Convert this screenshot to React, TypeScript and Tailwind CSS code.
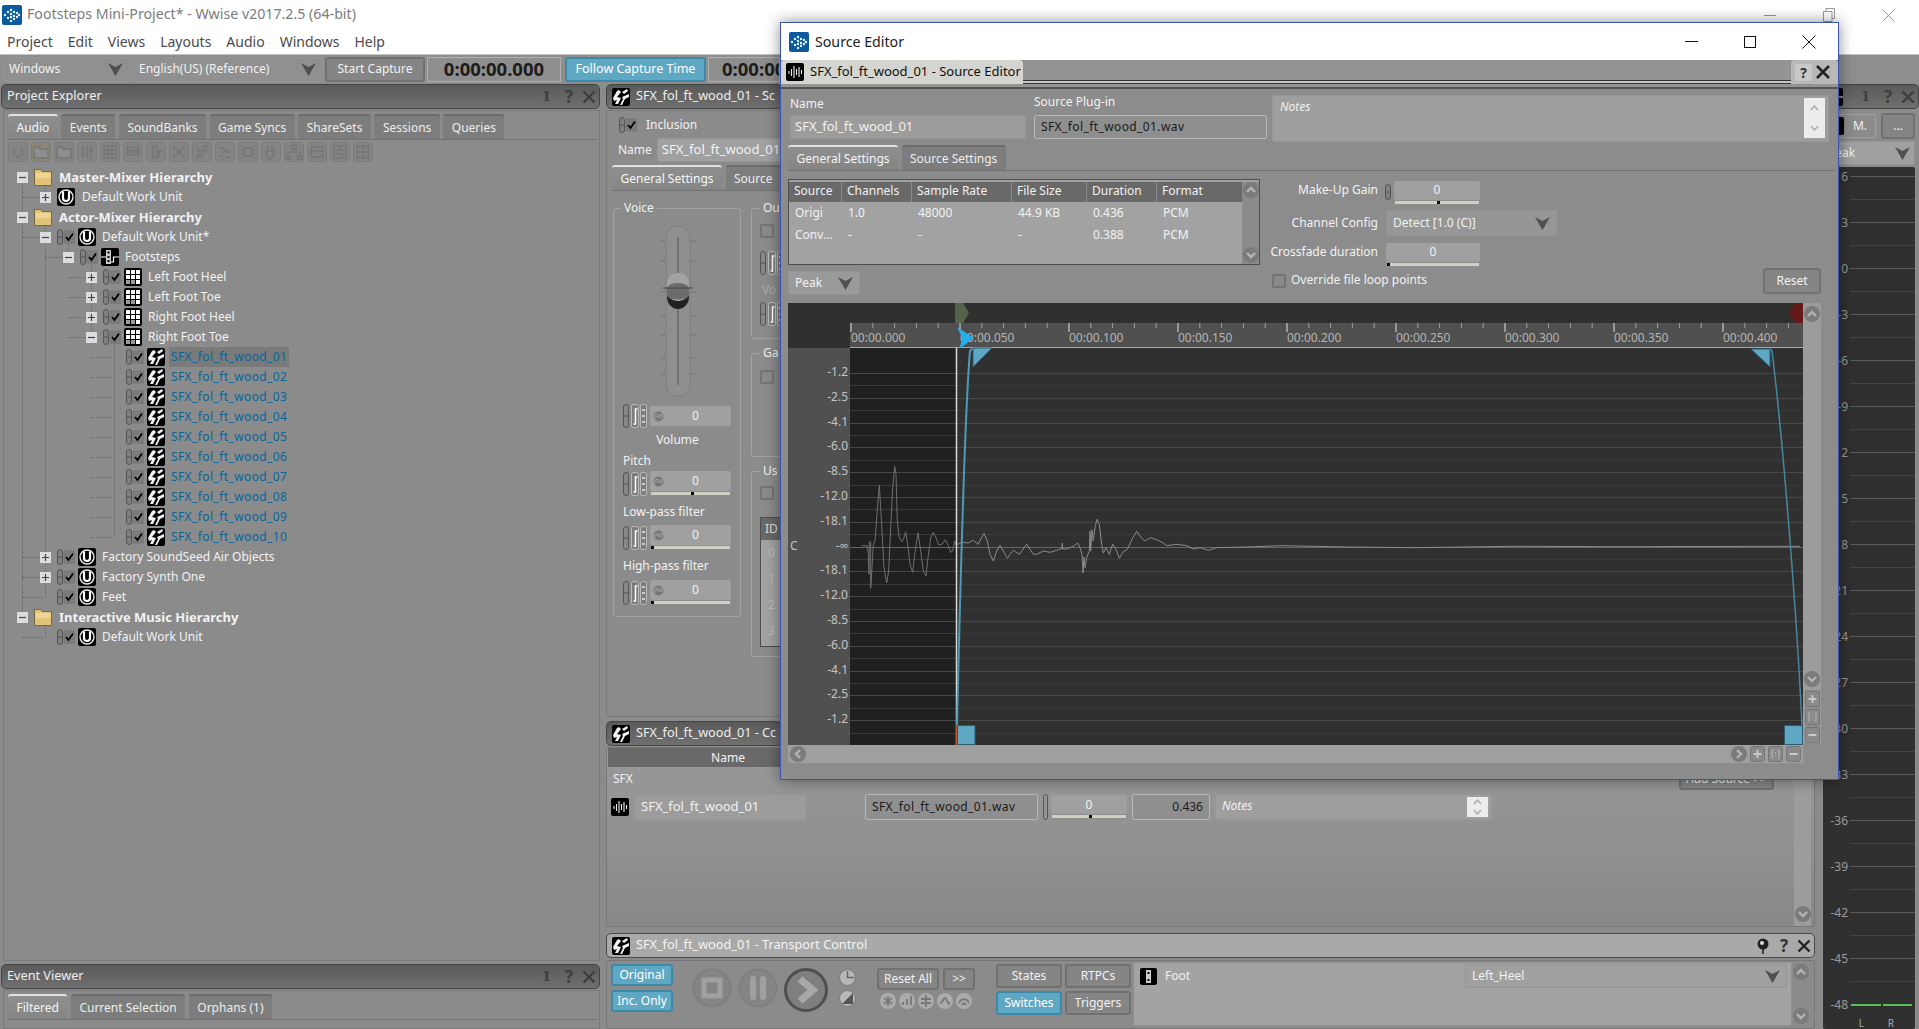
import React from "react";

const Logo = () => (
  <svg width="20" height="20" viewBox="0 0 20 20">
    <rect width="20" height="20" rx="2" fill="#0b5a9e" />
    {[[3, 10], [6, 7], [6, 13], [9, 5], [9, 9], [9, 12], [9, 16], [12, 7], [12, 11], [12, 14], [15, 8], [15, 12], [17, 10]].map(([x, y], i) => (
      <circle key={i} cx={x} cy={y} r="1.2" fill="#e8f4ff" />
    ))}
  </svg>
);

const Caret = () => (
  <svg width="15" height="13" viewBox="0 0 15 13" className="shrink-0">
    <path d="M0 0 L7.5 4 L15 0 L7.5 13Z" fill="#4f4f4f" />
  </svg>
);

const UIcon = () => (
  <svg width="18" height="18" viewBox="0 0 18 18" className="shrink-0">
    <rect width="18" height="18" rx="2" fill="#000" />
    <circle cx="9" cy="9" r="7" fill="none" stroke="#eee" strokeWidth="1.4" />
    <path d="M6 3.5V10a3 3 0 0 0 6 0V3.5" fill="none" stroke="#fff" strokeWidth="2.2" />
  </svg>
);

const FolderIcon = () => (
  <svg width="18" height="18" viewBox="0 0 18 18" className="shrink-0">
    <path d="M.5 1.500h6l1.500 2h9.500v14H.5z" fill="#e2c377" stroke="#7b6a3c" />
    <path d="M1.500 5h15v5h-15z" fill="#ecd596" />
  </svg>
);

const GridIcon = () => (
  <svg width="18" height="18" viewBox="0 0 18 18" className="shrink-0">
    <rect width="18" height="18" rx="2" fill="#000" />
    {[2, 7, 12].flatMap((y) =>
      [2, 7, 12].map((x) => <rect key={`${x}-${y}`} x={x} y={y} width="4" height="4" fill={y === 12 && x < 12 ? "#999" : "#fff"} />)
    )}
  </svg>
);

const BlendIcon = () => (
  <svg width="18" height="18" viewBox="0 0 18 18" className="shrink-0">
    <rect width="18" height="18" rx="2" fill="#000" />
    <path d="M5 2h5v14H5z" fill="#ccc" />
    <path d="M6.500 3.500h2v2h-2zM6.500 8h2v2h-2zM6.500 12h2v2h-2z" fill="#000" />
    <path d="M0 9h5M10 14h2.500V9H18" stroke="#fff" fill="none" strokeWidth="1.200" />
  </svg>
);

const SoundIcon = () => (
  <svg width="18" height="18" viewBox="0 0 18 18" className="shrink-0">
    <rect width="18" height="18" rx="2" fill="#000" />
    <path d="M1 10 5 3l2-1 2 2-4 5 4 1-3 6H3l2-4-3 1zM10 4l5-3 1 2-4 3zM10 9l7-3v3l-4 2-3 6H8l3-6z" fill="#f2f2f2" />
  </svg>
);

const WaveIcon = () => (
  <svg width="18" height="18" viewBox="0 0 18 18" className="shrink-0">
    <rect width="18" height="18" rx="2" fill="#000" />
    <path d="M3 8v3M5.500 6v7M8 3v12M10.500 6v6M13 4v10M15.500 7v4" stroke="#eee" strokeWidth="1.100" />
  </svg>
);

const Check = ({ box = true }: { box?: boolean }) => (
  <svg width="18" height="17" viewBox="0 0 18 17" className="shrink-0">
    <rect x=".5" y=".5" width="5" height="15" rx="2.500" fill="#808080" stroke="#555" />
    <path d="M.5 8h5" stroke="#555" />
    {box && <rect x="7" y="2" width="11" height="12" rx="1" fill="#7c7c7c" stroke="#747474" />}
    {box && <path d="M9 8l2.500 3L16 4.500" fill="none" stroke="#000" strokeWidth="1.800" />}
  </svg>
);

const Expander = ({ open }: { open: boolean }) => (
  <svg width="11" height="11" viewBox="0 0 11 11" className="relative shrink-0">
    <rect width="11" height="11" fill="#dcdcdc" />
    <path d={open ? "M2 5.500h7" : "M2 5.500h7M5.500 2v7"} stroke="#2b3f8c" strokeWidth="1.200" />
  </svg>
);

const Box = ({ className = "" }: { className?: string }) => (
  <span className={`inline-block shrink-0 rounded-[2px] border-2 border-[#747474] bg-[#8a8a8a] ${className}`} />
);

const HeaderBtns = ({ pin = false, dark = false }: { pin?: boolean; dark?: boolean }) => (
  <div className={`-mr-[2px] ml-auto flex items-center gap-[5px] text-[17px] font-bold ${dark ? "text-[#333]" : "text-[#3e3e3e]"}`}>
    {pin ? (
      <svg width="14" height="18" viewBox="0 0 14 18" className="mr-[1px]">
        <circle cx="7" cy="7" r="5.500" fill="#222" />
        <circle cx="6" cy="6" r="2" fill="#ddd" />
        <path d="M7 12v5" stroke="#222" strokeWidth="1.500" />
      </svg>
    ) : (
      <span className="mr-[5px] font-['DejaVu_Serif',serif] text-[13px]">1</span>
    )}
    <span className="w-[16px] text-center">?</span>
    <svg width="14" height="14" viewBox="0 0 14 14">
      <path d="M1.500 1.500l11 11M12.500 1.500l-11 11" stroke={dark ? "#222" : "#3e3e3e"} strokeWidth="2.400" />
    </svg>
  </div>
);

const Header = ({ title, icon, right, active }: { title: string; icon?: React.ReactNode; right?: React.ReactNode; active?: boolean }) => (
  <div
    className={`flex h-[25px] shrink-0 items-center gap-[6px] overflow-hidden whitespace-nowrap rounded-[5px] border px-[5px] text-[12.7px] ${
      active
        ? "border-[#4a4a4a] bg-[#a9a9a9] text-[#f4f4f4]"
        : "border-[#444] bg-linear-to-b from-[#5a5a5a] to-[#707070] text-[#efefef]"
    }`}
  >
    {icon}
    <span className="pb-[2px]">{title}</span>
    {right}
  </div>
);

const Tabs = ({ items, active = 0, className = "" }: { items: string[]; active?: number; className?: string }) => (
  <div className={`flex h-[26px] shrink-0 items-end gap-[3.5px] border-b border-[#727272] text-[12px] ${className}`}>
    {items.map((t, i) => (
      <div
        key={t}
        className={`flex h-[25px] items-center whitespace-nowrap rounded-t-[3px] border-t-2 px-[8.5px] ${
          i === active
            ? "border-[#e2e2e2] bg-linear-to-b from-[#8f8f8f] to-[#858585] text-[#f6f6f6]"
            : "border-[#6c6c6c] bg-[#7d7d7d] text-[#ededed]"
        }`}
      >
        {t}
      </div>
    ))}
  </div>
);

const RoundBtn = ({ dir }: { dir: "up" | "down" | "left" | "right" }) => {
  const d = { up: "M4 10l4-4 4 4", down: "M4 6l4 4 4-4", left: "M10 4l-4 4 4 4", right: "M6 4l4 4-4 4" }[dir];
  return (
    <svg width="16" height="16" viewBox="0 0 16 16" className="shrink-0">
      <circle cx="8" cy="8" r="8" fill="#7b7b7b" />
      <path d={d} fill="none" stroke="#b4b4b4" strokeWidth="2.400" />
    </svg>
  );
};

const SmallBtn = ({ sym }: { sym: string }) => (
  <svg width="15" height="16" viewBox="0 0 15 16" className="shrink-0">
    <rect x=".5" y=".5" width="14" height="15" rx="2" fill="#8a8a8a" stroke="#757575" />
    {sym === "+" && <path d="M3.500 8h8M7.500 4v8" stroke="#c8c8c8" strokeWidth="2" />}
    {sym === "-" && <path d="M3.500 8h8" stroke="#c8c8c8" strokeWidth="2" />}
    {sym === "f" && <path d="M5 4H4v8h1M10 4h1v8h-1M7.500 6v1M7.500 9v1" fill="none" stroke="#b8b8b8" />}
  </svg>
);

const Field = ({ children, className = "" }: { children?: React.ReactNode; className?: string }) => (
  <div className={`flex items-center whitespace-nowrap rounded-[2px] border border-[#959595] bg-[#a0a0a0] px-[6px] ${className}`}>{children}</div>
);

const Bar = ({ notch, className = "" }: { notch?: "mid" | "left"; className?: string }) => (
  <div className={`relative h-[5px] rounded-[1px] border border-[#8d8d8d] bg-[#cfcfc2] ${className}`}>
    {notch && <span className={`absolute top-0 h-[3px] w-[3px] bg-[#0c0c0c] ${notch === "mid" ? "left-1/2" : "left-0"}`} />}
  </div>
);

const Cluster = () => (
  <div className="flex shrink-0 items-center gap-[2px]">
    <svg width="6" height="24" viewBox="0 0 6 24">
      <rect x=".5" y=".5" width="5" height="23" rx="2.500" fill="#888" stroke="#555" />
      <path d="M.5 12h5" stroke="#555" />
    </svg>
    <svg width="16" height="24" viewBox="0 0 16 24">
      <rect x=".5" y=".5" width="7" height="23" rx="2" fill="#7d7d7d" stroke="#bbb" />
      <path d="M2.500 20h2V5h2" fill="none" stroke="#fff" strokeWidth="1.500" />
      <rect x="9.500" y=".5" width="6" height="23" rx="2" fill="#7d7d7d" stroke="#bbb" />
      <path d="M11 6h3M11 12h3M11 18h3" stroke="#ccc" strokeWidth="2" />
    </svg>
  </div>
);

const NumRow = ({ notch }: { notch?: "mid" | "left" }) => (
  <div className="flex items-center gap-[3px]">
    <Cluster />
    <div className="flex w-[81px] flex-col">
      <div className="flex h-[20px] items-center rounded-[2px] bg-[#a0a0a0] pl-[3px] text-[12px]">
        <svg width="11" height="11" viewBox="0 0 11 11">
          <circle cx="5.500" cy="5.500" r="5" fill="#777" />
          <path d="M1 6c2-3 3-3 5-2s3 0 4-1M1 8c2-3 3-3 5-2s3 0 4-1" fill="none" stroke="#aaa" />
        </svg>
        <span className="ml-[28px]">0</span>
      </div>
      {notch && <Bar notch={notch} />}
    </div>
  </div>
);

type RowT = { label: string; level: number; kind: "folder" | "unit" | "grid" | "blend" | "sound"; exp?: "+" | "-"; check?: boolean; sel?: boolean };

const sounds: RowT[] = ["01", "02", "03", "04", "05", "06", "07", "08", "09", "10"].map((n, i) => ({
  label: `SFX_fol_ft_wood_${n}`,
  level: 4,
  kind: "sound",
  check: true,
  sel: i === 0,
}));

const rows: RowT[] = [
  { label: "Master-Mixer Hierarchy", level: 0, kind: "folder", exp: "-" },
  { label: "Default Work Unit", level: 1, kind: "unit", exp: "+" },
  { label: "Actor-Mixer Hierarchy", level: 0, kind: "folder", exp: "-" },
  { label: "Default Work Unit*", level: 1, kind: "unit", exp: "-", check: true },
  { label: "Footsteps", level: 2, kind: "blend", exp: "-", check: true },
  { label: "Left Foot Heel", level: 3, kind: "grid", exp: "+", check: true },
  { label: "Left Foot Toe", level: 3, kind: "grid", exp: "+", check: true },
  { label: "Right Foot Heel", level: 3, kind: "grid", exp: "+", check: true },
  { label: "Right Foot Toe", level: 3, kind: "grid", exp: "-", check: true },
  ...sounds,
  { label: "Factory SoundSeed Air Objects", level: 1, kind: "unit", exp: "+", check: true },
  { label: "Factory Synth One", level: 1, kind: "unit", exp: "+", check: true },
  { label: "Feet", level: 1, kind: "unit", check: true },
  { label: "Interactive Music Hierarchy", level: 0, kind: "folder", exp: "-" },
  { label: "Default Work Unit", level: 1, kind: "unit", check: true },
];

const guides = [
  [0, 0, 22],
  [1, 0, 1],
  [1, 2, 21],
  [2, 3, 4],
  [3, 4, 8],
  [4, 8, 18],
  [1, 22, 23],
];

const icons = { folder: <FolderIcon />, unit: <UIcon />, grid: <GridIcon />, blend: <BlendIcon />, sound: <SoundIcon /> };

const Tree = () => (
  <div className="relative mt-[5px]">
    {guides.map(([l, a, b], i) => (
      <span
        key={i}
        className="absolute w-0 border-l border-dotted border-[#666]"
        style={{ left: 18 + 23 * l, top: a * 20 + 10, height: (b - a) * 20 }}
      />
    ))}
    {rows.map((r, i) => (
      <div key={i} className="relative flex h-5 items-center whitespace-nowrap" style={{ paddingLeft: 12 + 23 * r.level }}>
        {r.level > 0 && (
          <span
            className="absolute top-[10px] h-0 w-[20px] border-t border-dotted border-[#666]"
            style={{ left: 18 + 23 * (r.level - 1) }}
          />
        )}
        <div className="relative flex w-[18px] shrink-0 pl-[1px]">{r.exp && <Expander open={r.exp === "-"} />}</div>
        {r.check && (
          <div className="relative mr-[3px]">
            <Check />
          </div>
        )}
        <div className="relative">{icons[r.kind]}</div>
        <span
          className={`px-[2px] leading-[20px] ${r.check ? "ml-[4px]" : "ml-[5px]"} ${r.kind === "folder" ? "text-[13px] font-bold" : "text-[12px]"} ${
            r.kind === "sound" ? "text-[#07659a] tracking-[0.4px]" : "text-[#f2f2f2]"
          } ${r.sel ? "bg-[#7a7a7a]" : ""}`}
        >
          {r.label}
        </span>
      </div>
    ))}
  </div>
);

const dimGlyphs = [
  "M6 5v6a4 4 0 0 0 8 0V5",
  "M3 5h5l1 2h8v9H3z",
  "M3 5h5l1 2h8v9H3z",
  "M6 4v12M10 4v12M14 4v12M4 12h4M12 8h4",
  "M4 4h12v12H4zM8 4v12M12 4v12M4 8h12M4 12h12",
  "M4 5h12v3H4zM4 10h12v3H4z",
  "M7 4h4v12H7zM3 10h4M11 14h2v-5h4",
  "M4 5c4 0 8 10 12 10M4 15c4 0 8-10 12-10",
  "M5 15 12 4h3l-6 11zM14 9l3-1M4 5l4 4",
  "M4 6h4l4 4h4M4 14h4M11 15h5M6 10h3",
  "M6 6h8v8H6zM3 8h3M3 12h3M14 8h3M14 12h3",
  "M7 3v6M11 3v6M5 9h8v3l-3 5H8l-3-5z",
  "M8 3h4v4H8zM10 7v3M4 14v-4h12v4M2 14h4v3H2zM14 14h4v3h-4z",
  "M4 5h12v10H4zM4 9h12",
  "M4 4h12v12H4zM4 8h12M4 12h12M10 4v4M8 8v4M12 12v4",
  "M4 4h12v12H4zM10 4v12M4 10h12",
];

const DimToolbar = () => (
  <div className="mt-[2px] flex h-[20px] gap-[3px] pl-[4px]">
    {dimGlyphs.map((d, i) => (
      <svg key={i} width="20" height="20" viewBox="0 0 20 20" className="shrink-0">
        <rect x=".5" y=".5" width="19" height="19" rx="3" fill={i === 1 ? "#8a8674" : "#848484"} stroke="#7c7c7c" />
        <path d={d} fill={i === 1 || i === 2 ? "#8e8e8e" : "none"} stroke="#757575" strokeWidth="1.500" />
      </svg>
    ))}
  </div>
);

// zoomed trace points of the waveform, converted to page pixels below
const wave = [
  [245, 614], [262, 614], [265, 640], [267, 700], [268, 603], [272, 603], [272, 742], [276, 680], [280, 610], [285, 600], [290, 530], [298, 433], [302, 500], [306, 570], [312, 680], [320, 726], [326, 690], [332, 560], [338, 440], [344, 376], [348, 400], [352, 540], [358, 590], [366, 602], [372, 590], [377, 572], [383, 610], [390, 670], [398, 694], [404, 640], [414, 575], [422, 630], [430, 690], [438, 706], [444, 650], [452, 590], [460, 574], [468, 590], [476, 612], [486, 610], [496, 596], [504, 612], [512, 634], [518, 630], [524, 600], [528, 612],
];
const wave2 = [
  [528, 612], [540, 606], [550, 604], [565, 606], [580, 598], [594, 610], [612, 577], [622, 600], [630, 640], [640, 660], [650, 630], [660, 613], [670, 630], [682, 652], [690, 640], [700, 628], [718, 640], [740, 610], [760, 640], [770, 640], [790, 630], [810, 634], [830, 628], [846, 622], [847, 606], [848, 624], [860, 624], [880, 616], [893, 606], [900, 620], [906, 640], [909, 696], [912, 648], [915, 680], [920, 650], [928, 630], [930, 570], [932, 630], [936, 566], [940, 600], [945, 560], [951, 535], [958, 550], [965, 610], [970, 636], [978, 620], [988, 640], [998, 610], [1008, 625], [1018, 652], [1030, 632], [1042, 625], [1056, 595], [1070, 571], [1082, 588], [1094, 600], [1112, 590], [1130, 596], [1150, 606], [1160, 614], [1190, 610], [1220, 614], [1240, 624], [1260, 620], [1285, 628], [1310, 620], [1400, 618], [1500, 614], [1700, 618], [1900, 620], [2200, 616], [2500, 617], [3060, 616],
];
const pts = (a: number[][]) => a.map(([x, y]) => `${(x / 3 + 780).toFixed(1)},${(y / 3 + 340).toFixed(1)}`).join(" ");

const dbLabels = ["-1.2", "-2.5", "-4.1", "-6.0", "-8.5", "-12.0", "-18.1", "-∞", "-18.1", "-12.0", "-8.5", "-6.0", "-4.1", "-2.5", "-1.2"];

const WaveView = () => (
  <svg viewBox="788 302 1015 442" width="1015" height="442" className="block shrink-0" fontSize="12">
    <rect x="788" y="302" width="1015" height="442" fill="#303030" />
    <rect x="850" y="322" width="953" height="25" fill="#505050" />
    <rect x="788" y="347" width="62" height="397" fill="#505050" />
    <rect x="850" y="347" width="106" height="397" fill="#202020" />
    <path d="M850 346.500H1803" stroke="#a5a5a5" />
    {Array.from({ length: 44 }, (_, i) => {
      const x = 851 + i * 21.8;
      return <path key={i} d={`M${x.toFixed(1)} 322V${i % 5 === 0 ? 331 : 327}`} stroke={i % 5 === 0 ? "#e0e0e0" : "#a0a0a0"} />;
    })}
    {["000", "050", "100", "150", "200", "250", "300", "350", "400"].map((t, i) => (
      <text key={t} x={851 + i * 109} y="341" fill="#b4b4b4">
        00:00.{t}
      </text>
    ))}
    {dbLabels.map((l, i) => {
      const y = 372 + i * 24.8;
      return (
        <g key={i}>
          <path d={`M850 ${Math.round(y) + 0.5}H1803`} stroke={i === 7 ? "#666" : "#484848"} />
          <path d={`M850 ${Math.round(y + 12.4) + 0.5}H1803`} stroke="#3a3a3a" />
          <text x="848" y={y + 3} textAnchor="end" fill="#c4c4c4">
            {l}
          </text>
        </g>
      );
    })}
    <text x="790" y="549" fill="#c4c4c4">C</text>
    <polyline points={pts(wave)} fill="none" stroke="#6f6f6f" />
    <polyline points={pts(wave2)} fill="none" stroke="#8c8c8c" />
    <path d="M955 302h8l6 10-6 10h-8z" fill="#55634a" />
    <path d="M1803 302h-8l-6 10 6 10h8z" fill="#651a1a" />
    <path d="M956.500 347V744" stroke="#d8d8d8" strokeWidth="1.500" />
    <path d="M956.500 724V744" stroke="#b4532e" />
    <path d="M957 724C960 600 964 420 970 350L973 347" fill="none" stroke="#4f9ab8" strokeWidth="2" />
    <path d="M973 347h19l-19 19z" fill="#5fa8c4" stroke="#2d5c70" />
    <rect x="957.500" y="724.500" width="17.500" height="19" fill="#5fa8c4" stroke="#2d5c70" />
    <path d="M1802 724C1796 600 1782 430 1772 350L1770 347" fill="none" stroke="#47879f" strokeWidth="1.500" />
    <path d="M1770 348h-19l19 18z" fill="#5fa8c4" stroke="#2d5c70" />
    <rect x="1784.500" y="724.500" width="18" height="19" fill="#5fa8c4" stroke="#2d5c70" />
    <path d="M958 327l15 10-13 10 3-10z" fill="#25aef0" stroke="#25aef0" />
  </svg>
);

const tableCols = [
  ["Source", "w-[53px]"],
  ["Channels", "w-[70px]"],
  ["Sample Rate", "w-[100px]"],
  ["File Size", "w-[75px]"],
  ["Duration", "w-[70px]"],
  ["Format", "w-[85px]"],
];
const tableRows = [
  ["Origi", "1.0", "48000", "44.9 KB", "0.436", "PCM"],
  ["Conv...", "-", "-", "-", "0.388", "PCM"],
];

const SourceEditor = () => (
  <div className="absolute left-[780px] top-[22px] z-10 flex h-[758px] w-[1059px] flex-col border border-[#3a53b4] bg-[#8c8c8c] text-[12px] text-[#f2f2f2] shadow-[0_0_14px_rgba(0,0,0,0.45)]">
    <div className="flex h-[37px] shrink-0 items-center bg-white pl-[8px]">
      <Logo />
      <span className="ml-[6px] text-[14.2px] text-[#222]">Source Editor</span>
      <div className="ml-auto flex items-center gap-[46px] pr-[22px]">
        <span className="h-px w-[13px] bg-[#111]" />
        <span className="h-[12px] w-[12px] border border-[#111]" />
        <svg width="14" height="14" viewBox="0 0 14 14">
          <path d="M.5.5l13 13M13.500.5l-13 13" stroke="#111" />
        </svg>
      </div>
    </div>
    <div className="flex h-[27px] shrink-0 items-start bg-[#949494]">
      <div className="flex h-[24px] w-[242px] items-center gap-[6px] rounded-t-[4px] bg-[#d4d4d0] pl-[5px] text-[13px] text-[#111]">
        <WaveIcon />
        SFX_fol_ft_wood_01 - Source Editor
      </div>
      <div className="mt-[20px] h-[4px] flex-1 border-y border-y-[#333] bg-[#c8c8c8]" />
      <div className="flex h-[24px] w-[47px] items-center gap-[3px] rounded-t-[4px] bg-[#b8b8b8] pl-[4px] text-[14px] font-bold text-[#333]">
        <span className="flex h-[17px] w-[17px] items-center justify-center rounded-[2px] bg-[#c8c8c8]">?</span>
        <svg width="16" height="16" viewBox="0 0 16 16">
          <path d="M2 2l12 12M14 2 2 14" stroke="#222" strokeWidth="2.600" />
        </svg>
      </div>
    </div>
    <div className="h-[2px] shrink-0 bg-[#555]" />

    <div className="flex flex-1 flex-col overflow-hidden pl-[7px] pt-[5px]">
      <div className="flex h-[50px] shrink-0">
        <div className="ml-[2px] flex w-[236px] flex-col">
          <div className="flex h-[21px] items-center pb-[2px]">Name</div>
          <Field className="h-[24px] !bg-[#9c9c9c] !pl-[4px] text-[13px]">SFX_fol_ft_wood_01</Field>
        </div>
        <div className="ml-[8px] flex w-[233px] flex-col">
          <div className="flex h-[21px] items-center pb-[5px]">Source Plug-in</div>
          <Field className="h-[24px] !border-[#b8b8b8] !bg-[#8f8f8f] tracking-[0.4px] text-[#1a1a1a]">SFX_fol_ft_wood_01.wav</Field>
        </div>
        <div className="ml-[5px] mt-[1px] flex h-[47px] w-[557px] items-start rounded-[2px] border border-[#979797] bg-[#9e9e9e] pl-[7px] pt-[2px] italic">
          Notes
          <div className="ml-auto mr-[3px] mt-[0px] flex h-[40px] w-[21px] flex-col items-center justify-around bg-[#ececec] text-[#aaa]">
            <svg width="9" height="6" viewBox="0 0 9 6"><path d="M1 5l3.500-4L8 5" fill="none" stroke="#aaa" strokeWidth="1.500" /></svg>
            <svg width="9" height="6" viewBox="0 0 9 6"><path d="M1 1l3.500 4L8 1" fill="none" stroke="#aaa" strokeWidth="1.500" /></svg>
          </div>
        </div>
      </div>

      <Tabs items={["General Settings", "Source Settings"]} className="mr-[3px] mt-[1px]" />

      <div className="mt-[8px] flex h-[116px] shrink-0">
        <div className="flex w-[472px] flex-col">
          <div className="flex h-[86px] border border-[#4e4e4e] bg-[#a2a2a2] pt-[2px]">
            <div className="flex flex-1 flex-col">
              <div className="flex h-[20px] bg-[#696969]">
                {tableCols.map(([c, w]) => (
                  <div key={c} className={`flex items-center border-r border-[#8a8a8a] pb-[3px] pl-[5px] last:border-r-0 ${w}`}>
                    {c}
                  </div>
                ))}
              </div>
              {tableRows.map((r, i) => (
                <div key={i} className="flex h-[22px]">
                  {r.map((v, j) => (
                    <div key={j} className={`flex items-center pl-[6px] ${tableCols[j][1]}`}>
                      {v}
                    </div>
                  ))}
                </div>
              ))}
            </div>
            <div className="flex w-[17px] flex-col items-center justify-between bg-[#8b8b8b] pb-[1px]">
              <RoundBtn dir="up" />
              <RoundBtn dir="down" />
            </div>
          </div>
          <Field className="mt-[6px] h-[24px] w-[72px] justify-between !bg-[#9a9a9a] !px-[6px] pr-[4px]">
            Peak
            <Caret />
          </Field>
        </div>

        <div className="ml-[10px] flex w-[553px] flex-col">
          <div className="flex h-[27px] items-center">
            <span className="w-[108px] pb-[5px] text-right">Make-Up Gain</span>
            <span className="ml-[7px]"><Check box={false} /></span>
            <div className="-ml-[9px] flex w-[86px] flex-col">
              <div className="flex h-[19px] items-center justify-center rounded-[2px] bg-[#a0a0a0] pb-[1px]">0</div>
              <Bar notch="mid" />
            </div>
          </div>
          <div className="mt-[4px] flex h-[26px] items-center">
            <span className="w-[108px] text-right">Channel Config</span>
            <Field className="ml-[8px] h-[26px] w-[171px] justify-between !bg-[#969696]">
              Detect [1.0 (C)]
              <Caret />
            </Field>
          </div>
          <div className="mt-[7px] flex h-[24px] items-center">
            <span className="w-[108px] pb-[6px] text-right">Crossfade duration</span>
            <div className="ml-[8px] flex w-[94px] flex-col">
              <div className="flex h-[19px] items-center justify-center rounded-[2px] bg-[#a0a0a0] pb-[1px]">0</div>
              <Bar notch="left" />
            </div>
          </div>
          <div className="mt-[1px] flex items-center">
            <Box className="ml-[2px] h-[14px] w-[14px]" />
            <span className="ml-[5px] pb-[2px]">Override file loop points</span>
            <div className="ml-auto mr-[2px] flex h-[26px] w-[58px] items-center justify-center rounded-[3px] border-2 border-[#717171] bg-[#858585]">Reset</div>
          </div>
        </div>
      </div>

      <div className="mt-[8px] flex shrink-0">
        <WaveView />
        <div className="flex w-[18px] flex-col items-center bg-[#9c9c9c] pt-[3px]">
          <RoundBtn dir="up" />
          <div className="flex-1" />
          <RoundBtn dir="down" />
          <div className="mt-[3px] flex flex-col gap-[2px] bg-[#8c8c8c] pb-[2px] pt-[1px]">
            <SmallBtn sym="+" />
            <SmallBtn sym="f" />
            <SmallBtn sym="-" />
          </div>
        </div>
      </div>
      <div className="flex h-[18px] w-[1015px] shrink-0 items-center gap-[3px] bg-[#9f9f9f] pl-[2px] pr-[2px]">
        <RoundBtn dir="left" />
        <div className="flex-1" />
        <RoundBtn dir="right" />
        <SmallBtn sym="+" />
        <SmallBtn sym="f" />
        <SmallBtn sym="-" />
      </div>
    </div>
  </div>
);

const Fader = () => (
  <svg width="40" height="172" viewBox="0 0 40 172" className="mx-auto block shrink-0">
    <rect x="8" y=".5" width="24" height="171" rx="12" fill="#8f8f8f" stroke="#7e7e7e" />
    <path d="M20 12V160" stroke="#717171" strokeWidth="2" />
    {[16, 36, 67, 91, 110, 133, 149].map((y) => (
      <path key={y} d={`M2 ${y}h6M32 ${y}h6`} stroke="#777" />
    ))}
    <ellipse cx="20" cy="72" rx="11" ry="12" fill="#222" />
    <rect x="9" y="48" width="22" height="28" rx="10" fill="#a3a3a3" />
    <path d="M9 64c0-8 22-8 22 0v6c0 6-22 6-22 0z" fill="#6c6c6c" />
    <path d="M5 63h30" stroke="#444" />
  </svg>
);

const Legend = ({ t, className = "" }: { t: string; className?: string }) => (
  <legend className={`px-[3px] text-[12px] text-[#f2f2f2] ${className}`}>{t}</legend>
);

// only the part left of the floating Source Editor can ever be seen, so this panel stops there
const PropertyPanel = () => (
  <div className="mt-[1px] flex h-[607px] w-[176px] shrink-0 flex-col overflow-hidden rounded-[2px] border border-[#7a7a7a] pl-[5px]">
    <div className="mt-[5px] flex h-[18px] items-center pl-[7px]">
      <Check />
      <span className="ml-[9px]">Inclusion</span>
    </div>
    <div className="mt-[3px] flex h-[25px] items-center pl-[6px]">
      Name
      <Field className="ml-[5px] h-[24px] w-[130px] shrink-0 overflow-hidden !pl-[4px] text-[13px]">SFX_fol_ft_wood_01</Field>
    </div>
    <Tabs items={["General Settings", "Source"]} className="mt-[3px] w-[300px]" />
    <div className="mt-[8px] flex gap-[10px] pl-[1px]">
      <fieldset className="h-[418px] w-[128px] shrink-0 rounded-[3px] border border-[#a2a2a2] pl-[9px] pr-[8px]">
        <Legend t="Voice" className="-ml-[2px]" />
        <div className="mt-[8px]">
          <Fader />
        </div>
        <div className="mt-[7px]"><NumRow /></div>
        <div className="mt-[3px] text-center">Volume</div>
        <div className="mt-[3px]">Pitch</div>
        <div className="mt-[1px]"><NumRow notch="mid" /></div>
        <div className="mt-[7px]">Low-pass filter</div>
        <div className="mt-[4px]"><NumRow notch="left" /></div>
        <div className="mt-[7px]">High-pass filter</div>
        <div className="mt-[5px]"><NumRow notch="left" /></div>
      </fieldset>
      <div className="flex w-[60px] shrink-0 flex-col gap-[5px]">
        <fieldset className="h-[140px] rounded-[3px] border border-[#a2a2a2] pl-[8px]">
          <Legend t="Ou" />
          <Box className="mt-[7px] h-[14px] w-[14px]" />
          <div className="mt-[8px]"><Cluster /></div>
          <div className="mt-[6px] pl-[2px] text-[#aaa]">Vo</div>
          <div className="mt-[3px]"><Cluster /></div>
        </fieldset>
        <fieldset className="h-[113px] rounded-[3px] border border-[#a2a2a2] pl-[8px]">
          <Legend t="Ga" />
          <Box className="mt-[8px] h-[14px] w-[14px]" />
        </fieldset>
        <fieldset className="h-[195px] rounded-[3px] border border-[#a2a2a2] pl-[8px]">
          <Legend t="Us" />
          <Box className="mt-[6px] h-[14px] w-[14px]" />
          <div className="mt-[12px] h-[130px] w-[40px] border border-[#4e4e4e] bg-[#a2a2a2] text-[#bdbdbd]">
            <div className="flex h-[22px] items-center bg-[#696969] pl-[4px] text-[#ddd]">ID</div>
            {["0", "1", "2", "3"].map((n) => (
              <div key={n} className="flex h-[26px] items-center pl-[7px]">{n}</div>
            ))}
          </div>
        </fieldset>
      </div>
    </div>
  </div>
);

const ContentsPanel = () => (
  <div className="mt-[1px] flex h-[180px] shrink-0 overflow-hidden rounded-[2px] border border-[#777] bg-linear-to-b from-[#9a9a9a] to-[#888]">
    <div className="flex flex-1 flex-col pl-[1px]">
      <div className="flex h-[19px] w-[172px] items-center bg-[#696969]">
        <span className="w-[240px] shrink-0 text-center">Name</span>
      </div>
      <div className="flex h-[23px] items-center bg-[#969696] pl-[5px] pr-[20px]">
        SFX
        <div className="ml-auto flex h-[23px] w-[95px] items-center justify-center rounded-[3px] border-2 border-[#717171] bg-[#858585]">Add Source &gt;&gt;</div>
      </div>
      <div className="mt-[4px] flex h-[26px] items-center">
        <span className="ml-[3px]"><WaveIcon /></span>
        <Field className="ml-[5px] h-[26px] w-[173px] !bg-[#9c9c9c] text-[13px]">SFX_fol_ft_wood_01</Field>
        <Field className="ml-[58px] h-[26px] w-[173px] !border-[#b8b8b8] !bg-[#8f8f8f] tracking-[0.4px] text-[#1a1a1a]">SFX_fol_ft_wood_01.wav</Field>
        <span className="ml-[5px] h-[26px] w-[5px] rounded-[3px] border border-[#555]" />
        <div className="ml-[3px] flex w-[76px] flex-col">
          <div className="flex h-[19px] items-center justify-center rounded-[2px] bg-[#a0a0a0]">0</div>
          <Bar notch="mid" />
        </div>
        <Field className="ml-[5px] h-[26px] w-[78px] justify-end !border-[#b8b8b8] !bg-[#8f8f8f] text-[#1a1a1a]">0.436</Field>
        <div className="ml-[5px] flex h-[26px] w-[277px] items-start rounded-[2px] border border-[#979797] bg-[#9e9e9e] pl-[6px] pt-[2px] italic">
          Notes
          <div className="ml-auto mr-[3px] flex h-[20px] w-[21px] flex-col items-center justify-around bg-[#ececec]">
            <svg width="9" height="6" viewBox="0 0 9 6"><path d="M1 5l3.500-4L8 5" fill="none" stroke="#aaa" strokeWidth="1.500" /></svg>
            <svg width="9" height="6" viewBox="0 0 9 6"><path d="M1 1l3.500 4L8 1" fill="none" stroke="#aaa" strokeWidth="1.500" /></svg>
          </div>
        </div>
      </div>
    </div>
    <div className="mr-[3px] flex w-[17px] flex-col items-center justify-end bg-[#9c9c9c] pb-[4px]">
      <RoundBtn dir="down" />
    </div>
  </div>
);

const TButton = ({ children, blue, className = "" }: { children: React.ReactNode; blue?: boolean; className?: string }) => (
  <div
    className={`flex items-center justify-center whitespace-nowrap rounded-[3px] border-2 text-[12px] ${
      blue ? "border-[#3d8aa8] bg-[#5fa8c4] text-white" : "border-[#717171] bg-[#858585] text-[#f2f2f2]"
    } ${className}`}
  >
    {children}
  </div>
);

const mini = ["M8 3v10M4 5l8 6M4 11l8-6", "M4 12V9M8 12V6M12 12V3", "M8 2v12M3 6h10M3 10h10", "M3 10c3 0 3-5 5-5s2 6 5 6", "M3 10c2-5 8-5 10 0M6 12c1-2 3-2 4 0"];

const Circle = ({ r, dark, children }: { r: number; dark?: boolean; children: React.ReactNode }) => (
  <svg width={r * 2} height={r * 2} viewBox={`0 0 ${r * 2} ${r * 2}`} className="shrink-0">
    <circle cx={r} cy={r} r={r - 1.5} fill={dark ? "#7f7f7f" : "#858585"} stroke={dark ? "#4f4f4f" : "#7f7f7f"} strokeWidth={dark ? 3 : 2} />
    {children}
  </svg>
);

const Transport = () => (
  <div className="mt-[2px] flex h-[70px] overflow-hidden rounded-[2px] border border-[#777] pl-[4px] pt-[3px]">
    <div className="flex w-[62px] shrink-0 flex-col gap-[4px]">
      <TButton blue className="h-[22px]">Original</TButton>
      <TButton blue className="h-[22px]">Inc. Only</TButton>
    </div>
    <div className="ml-[19px] flex items-start gap-[6px] pt-[4px]">
      <Circle r={20}>
        <rect x="12" y="12" width="16" height="16" fill="none" stroke="#a0a0a0" strokeWidth="5" />
      </Circle>
      <Circle r={20}>
        <path d="M15 11v18M25 11v18" stroke="#a0a0a0" strokeWidth="6" strokeLinecap="round" />
      </Circle>
      <Circle r={22} dark>
        <path d="M16 11l13 11-13 11" fill="none" stroke="#a8a8a8" strokeWidth="7" />
      </Circle>
    </div>
    <div className="ml-[11px] flex flex-col gap-[4px] pt-[5px]">
      <svg width="17" height="17" viewBox="0 0 17 17">
        <circle cx="8.500" cy="8.500" r="8" fill="#b8b8b8" stroke="#777" />
        <path d="M8.500 2v6.500H15" fill="none" stroke="#666" strokeWidth="1.500" />
      </svg>
      <svg width="17" height="17" viewBox="0 0 17 17">
        <circle cx="8.500" cy="8.500" r="8" fill="#b8b8b8" stroke="#777" />
        <path d="M3 14 14 3v11z" fill="#555" />
      </svg>
    </div>
    <div className="ml-[21px] flex w-[100px] shrink-0 flex-col pt-[4px]">
      <div className="flex gap-[4px]">
        <TButton className="h-[22px] w-[62px]">Reset All</TButton>
        <TButton className="h-[22px] w-[32px]">&gt;&gt;</TButton>
      </div>
      <div className="mt-[3px] flex gap-[3px] pl-[3px]">
        {mini.map((d, i) => (
          <svg key={i} width="16" height="16" viewBox="0 0 16 16" className="shrink-0">
            <circle cx="8" cy="8" r="8" fill="#ababab" />
            <path d={d} fill="none" stroke="#777" strokeWidth="1.800" />
          </svg>
        ))}
      </div>
    </div>
    <div className="ml-[19px] grid shrink-0 grid-cols-[66px_66px] grid-rows-[24px_24px] gap-[3px]">
      <TButton>States</TButton>
      <TButton>RTPCs</TButton>
      <TButton blue>Switches</TButton>
      <TButton>Triggers</TButton>
    </div>
    <div className="ml-[2px] mt-[-2px] flex h-[64px] w-[659px] shrink-0 items-start justify-between border border-[#8f8f8f] bg-[#a3a3a3] pl-[6px] pt-[1px]">
      <div className="flex h-[24px] items-center gap-[8px]">
        <svg width="17" height="17" viewBox="0 0 17 17">
          <rect width="17" height="17" rx="2" fill="#000" />
          <path d="M6 2h5v13H6z" fill="#ccc" />
          <path d="M7.500 4h2v2h-2zM7.500 11h2v2h-2z" fill="#000" />
        </svg>
        Foot
      </div>
      <Field className="mr-[4px] h-[24px] w-[322px] justify-between">
        Left_Heel
        <Caret />
      </Field>
    </div>
    <div className="flex w-[17px] shrink-0 flex-col items-center justify-between pb-[4px]">
      <RoundBtn dir="up" />
      <RoundBtn dir="down" />
    </div>
  </div>
);

const meterValues = Array.from({ length: 19 }, (_, i) => 6 - i * 3);

const Meter = () => (
  <div className="mr-[4px] mt-[2px] flex-1 overflow-hidden rounded-[2px] bg-[#303030] text-[12px] text-[#9a9a9a]">
    <div className="-mt-[2px]">
      {meterValues.map((v) => (
        <React.Fragment key={v}>
          <div className="flex h-[23px] items-center">
            <span className="w-[25px] text-right">{v}</span>
            {v === -48 ? (
              <div className="ml-[3px] flex flex-1 gap-[2px]">
                <span className="h-[2px] w-[30px] bg-[#55c455]" />
                <span className="h-[2px] w-[29px] bg-[#55c455]" />
              </div>
            ) : (
              <span className="ml-[2px] h-px flex-1 bg-[#5a5a5a]" />
            )}
          </div>
          {v === -48 ? (
            <div className="flex h-[12px] items-start text-[10px] text-[#aaa]">
              <span className="w-[41px] text-right">L</span>
              <span className="w-[30px] text-right">R</span>
            </div>
          ) : (
            <div className="flex h-[23px] items-center pl-[27px]">
              <span className="h-px flex-1 bg-[#444]" />
            </div>
          )}
        </React.Fragment>
      ))}
    </div>
  </div>
);

const TimeBox = ({ className = "" }: { className?: string }) => (
  <div className={`flex h-[25px] items-center justify-center border border-[#b0b0b0] text-[18.5px] font-bold text-[#1c1c1c] ${className}`}>0:00:00.000</div>
);

export default function App() {
  return (
    <div className="relative flex h-[1029px] w-[1919px] flex-col overflow-hidden bg-white font-['Noto_Sans','Open_Sans',sans-serif] text-[12px] text-[#f2f2f2]">
      <div className="flex h-[30px] shrink-0 items-center pl-[2px]">
        <Logo />
        <span className="ml-[5px] pb-[2px] text-[14.2px] text-[#7c7c7c]">Footsteps Mini-Project* - Wwise v2017.2.5 (64-bit)</span>
        <div className="ml-auto flex items-center gap-[47px] pr-[24px]">
          <span className="h-px w-[12px] bg-[#999]" />
          <svg width="12" height="14" viewBox="0 0 12 14">
            <path d="M.5 3.500h8.500v10H.5zM3 3.500v-3h8.500v10H9" fill="none" stroke="#999" />
          </svg>
          <svg width="13" height="13" viewBox="0 0 13 13">
            <path d="M.5.5l12 12M12.500.5l-12 12" stroke="#999" />
          </svg>
        </div>
      </div>
      <div className="flex h-[24px] shrink-0 items-center gap-[15px] pb-[1px] pl-[7px] text-[14px] text-[#4a4a4a]">
        {["Project", "Edit", "Views", "Layouts", "Audio", "Windows", "Help"].map((m) => (
          <span key={m}>{m}</span>
        ))}
      </div>
      <div className="flex h-[29px] shrink-0 items-center gap-[2px] border-t border-[#c4c4c4] bg-[#8e8e8e] pl-[2px]">
        <Field className="h-[25px] w-[128px] justify-between !border-[#959595] !bg-[#909090]">
          Windows
          <Caret />
        </Field>
        <Field className="h-[25px] w-[191px] justify-between !bg-[#909090]">
          English(US) (Reference)
          <Caret />
        </Field>
        <TButton className="h-[25px] w-[100px]">Start Capture</TButton>
        <TimeBox className="w-[134px]" />
        <TButton blue className="ml-[2px] h-[25px] w-[141px] !text-[12.5px]">Follow Capture Time</TButton>
        <TimeBox className="w-[72px] justify-start overflow-hidden pl-[13px]" />
      </div>

      <div className="flex min-h-0 flex-1 bg-[#8b8b8b]">
        <div className="flex w-[600px] shrink-0 flex-col pl-[1px] pt-[1px]">
          <Header title="Project Explorer" right={<HeaderBtns />} />
          <div className="ml-[2px] mt-[1px] flex h-[851px] flex-col overflow-hidden border border-[#7a7a7a] pl-[3px] pr-[2px] pt-[3px]">
            <Tabs items={["Audio", "Events", "SoundBanks", "Game Syncs", "ShareSets", "Sessions", "Queries"]} className="pl-[1px]" />
            <div className="-ml-[3px]">
              <DimToolbar />
              <Tree />
            </div>
          </div>
          <div className="mt-[3px]">
            <Header title="Event Viewer" right={<HeaderBtns />} />
          </div>
          <div className="ml-[2px] mt-[1px] flex-1 overflow-hidden border border-[#7a7a7a] pl-[3px] pr-[2px] pt-[3px]">
            <Tabs items={["Filtered", "Current Selection", "Orphans (1)"]} className="pl-[1px]" />
          </div>
        </div>

        <div className="flex w-[1215px] shrink-0 flex-col pl-[6px] pt-[1px]">
          <div className="w-[176px]">
            <Header title="SFX_fol_ft_wood_01 - Sc" icon={<SoundIcon />} />
          </div>
          <PropertyPanel />
          <div className="mt-[4px] w-[176px]">
            <Header title="SFX_fol_ft_wood_01 - Cc" icon={<SoundIcon />} />
          </div>
          <ContentsPanel />
          <div className="mt-[6px]">
            <Header active title="SFX_fol_ft_wood_01 - Transport Control" icon={<SoundIcon />} right={<HeaderBtns pin dark />} />
          </div>
          <Transport />
        </div>

        <div className="flex min-w-0 flex-1 flex-col pl-[8px] pt-[1px]">
          <Header title="" icon={<span className="-ml-[4px]"><BlendIcon /></span>} right={<HeaderBtns />} />
          <div className="mt-[3px] flex h-[27px] shrink-0 items-center justify-end gap-[5px] pr-[4px]">
            <div className="flex h-[24px] w-[40px] items-center justify-between rounded-[2px] border border-[#a0a0a0] pr-[8px]">
              <span className="h-[18px] w-[7px] rounded-r-[2px] bg-[#000]" />
              M.
            </div>
            <TButton className="h-[26px] w-[34px]">...</TButton>
          </div>
          <Field className="mr-[4px] mt-[2px] h-[24px] shrink-0 justify-between !px-[4px]">
            Peak
            <Caret />
          </Field>
          <Meter />
        </div>
      </div>

      <SourceEditor />
    </div>
  );
}
